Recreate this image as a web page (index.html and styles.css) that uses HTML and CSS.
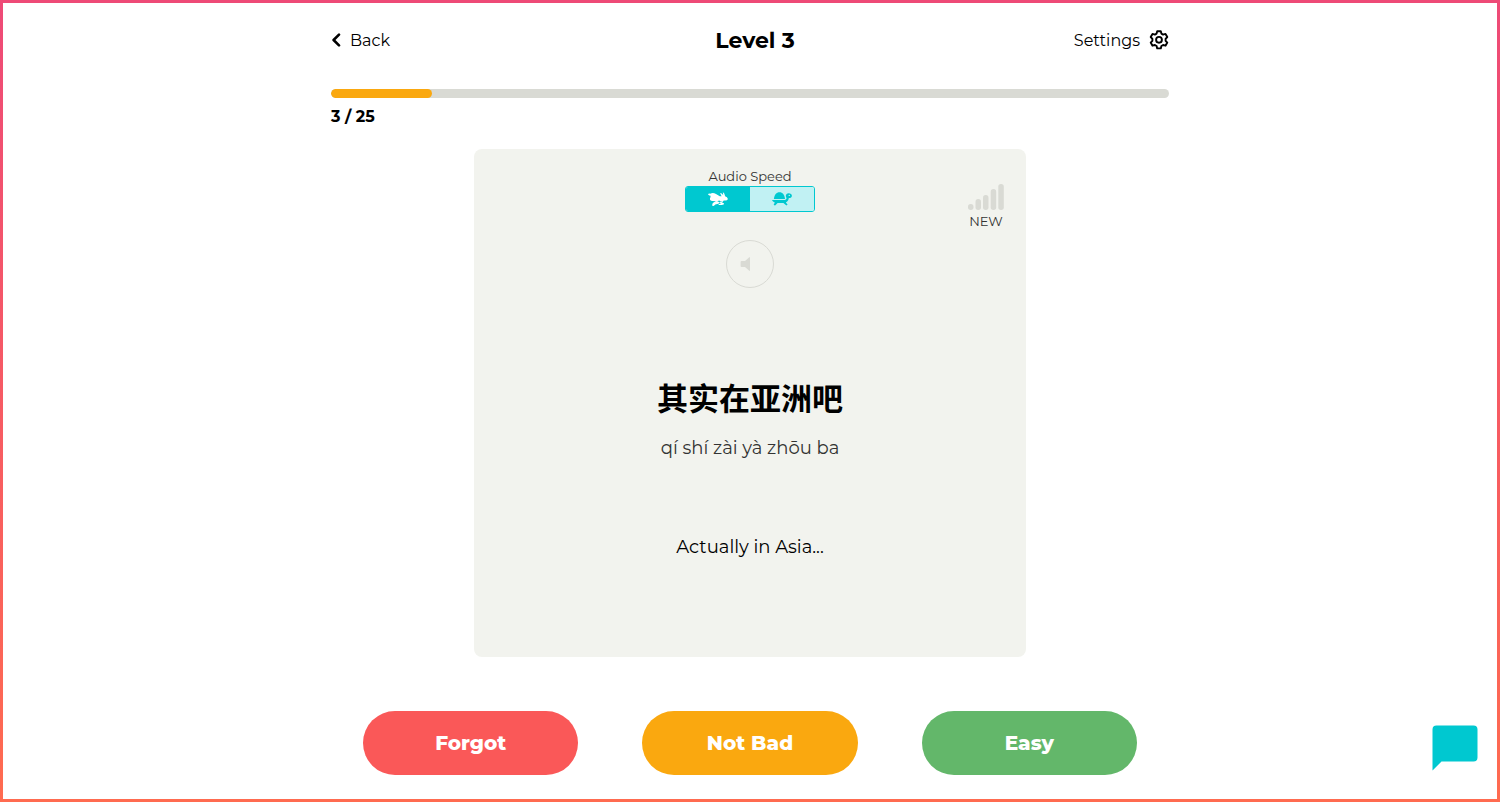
FILE: index.html
```html
<!DOCTYPE html>
<html lang="en">
<head>
    <meta charset="utf-8">
    <meta name="viewport" content="width=device-width, initial-scale=1">
    <title>Level 3</title>
    <link rel="stylesheet" href="styles.css">
</head>
<body>
    <div class="container">
        <header class="top-bar">
            <a class="back" href="#">
                <svg width="10" height="14" viewBox="0 0 10 14" fill="none" stroke="currentColor" stroke-width="2.6" stroke-linecap="round" stroke-linejoin="round"><path d="M8 1.6 2.6 7 8 12.400"/></svg>
                Back
            </a>
            <h1>Level 3</h1>
            <a class="settings" href="#">
                Settings
                <svg width="20" height="20" viewBox="0 0 20 20" fill="none" stroke="currentColor" stroke-width="1.9" stroke-linejoin="round"><path d="M8.200 1.200h3.600l.6 2.400 1.700 1 2.400-.7 1.800 3.100-1.700 1.800v2l1.700 1.800-1.800 3.100-2.400-.7-1.700 1-.6 2.400H8.200l-.6-2.400-1.700-1-2.400.7-1.800-3.100 1.700-1.800v-2L1.700 7l1.800-3.100 2.400.7 1.700-1z"/><circle cx="10" cy="9.800" r="2.900"/></svg>
            </a>
        </header>

        <progress class="progress" id="progress" max="25" value="3"></progress>
        <label class="count" for="progress">3 / 25</label>

        <main class="card">
            <div class="audio">
                <span class="audio-label" id="speedLabel">Audio Speed</span>
                <div class="speed" role="group" aria-labelledby="speedLabel">
                    <button type="button" class="active" aria-label="Normal" aria-pressed="true">
                        <svg width="20" height="14" viewBox="0 0 20 14" fill="currentColor"><path d="M0 2.400Q.6 1.200 2.200 1.800 4.800 0 8 2L11.800 4.200 13.600 4.200 12 1.100Q14 1.200 15.200 3.200L14.900 0Q16.800 1.200 17.100 4.200 19.400 5 19.900 7 19.400 8.600 17.400 8.600L15.800 8.600 14.400 9.900 11 8.600 9.600 9.200 4.500 9Q1.500 8.800 2 6.600 2.600 5.200 2.600 3.800 1.400 3.600 0 2.400Z"/><path d="M9.400 9.300 12 10.400Q10.400 12.400 7.800 12.200L5.600 14 4 13.500 4.800 10.900 8 9Z"/><path d="m12.600 9.400 3.500 2-.7 1.300-3.800-1.400ZM10.600 11.900h3.600l.5 1.200h-4Z"/></svg>
                    </button>
                    <button type="button" aria-label="Slow" aria-pressed="false">
                        <svg width="20" height="14" viewBox="0 0 20 14" fill="currentColor"><path d="M1.900 7C2.300 2.900 4.400.3 7.500.3S12.600 2.900 13 7Z"/><path d="M0 8h13.200l1.400-1.500-.8-2.400C13.800 2.200 15 1.200 16.600 1.200c2 0 3.300 1 3.300 2.600S18.700 6 16.800 6.100c-.2 2.200-1.400 3.700-3 4.300l1.800 2.200-1.200 1-3-2.700H5.600l-2.500 2.700-1.500-.7 1.200-2.500C1.500 10 .4 9.200 0 8Z"/><circle cx="17.300" cy="3.400" r=".7" fill="#c1f1f3"/></svg>
                    </button>
                </div>
            </div>

            <div class="strength">
                <svg width="36" height="26" viewBox="0 0 36 26" fill="#d9dad4"><rect y="20" width="5.500" height="6" rx="2.700"/><rect x="7.500" y="15" width="5.500" height="11" rx="2.700"/><rect x="15" y="11" width="5.500" height="15" rx="2.700"/><rect x="22.700" y="5" width="5.500" height="21" rx="2.700"/><rect x="30.300" width="5.500" height="26" rx="2.700"/></svg>
                <span>NEW</span>
            </div>

            <button type="button" class="play" aria-label="Play audio">
                <svg width="20" height="14" viewBox="0 0 20 14" fill="currentColor"><path d="M1.500 4H5l4-3.500a.5.5 0 0 1 1 .3v12.400a.5.5 0 0 1-1 .3L5 10H1.500a.9.9 0 0 1-.9-.9V4.900a.9.9 0 0 1 .9-.9Z"/></svg>
            </button>

            <p class="hanzi" lang="zh-CN">其实在亚洲吧</p>
            <p class="pinyin">qí shí zài yà zhōu ba</p>
            <p class="meaning">Actually in Asia...</p>
        </main>

        <div class="answers">
            <button type="button" class="forgot">Forgot</button>
            <button type="button" class="not-bad">Not Bad</button>
            <button type="button" class="easy">Easy</button>
        </div>
    </div>

    <button type="button" class="chat" aria-label="Chat">
        <svg width="46" height="46" viewBox="0 0 46 46" fill="currentColor"><path d="M4.500.5h37a4 4 0 0 1 4 4v28a4 4 0 0 1-4 4h-32L.5 45.500v-41a4 4 0 0 1 4-4Z"/></svg>
    </button>
</body>
</html>
```
FILE: styles.css
```css
* {
    box-sizing: border-box;
}
body {
    margin: 0;
    min-height: 100vh;
    border: 3px solid;
    border-image: linear-gradient(#ee4a77, #ff6b50) 1;
    background-color: #fff;
    color: #000;
    font-family: Montserrat, Inter, "Noto Sans CJK SC", sans-serif;
    font-size: 16px;
}
button {
    border: none;
    padding: 0;
    font-family: inherit;
    cursor: pointer;
}
svg {
    display: block;
    flex: none;
}
.container {
    max-width: 838px;
    margin: 0 auto;
    padding-top: 22px;
}
.top-bar {
    display: grid;
    grid-template-columns: 1fr auto 1fr;
    align-items: center;
    height: 30px;
}
.top-bar a {
    display: flex;
    align-items: center;
    color: inherit;
    text-decoration: none;
}
.top-bar h1 {
    margin: 0;
    padding-left: 10px;
    font-size: 22px;
    font-weight: 700;
}
.back {
    gap: 9px;
}
.settings {
    justify-content: flex-end;
    gap: 9px;
}
.progress {
    display: block;
    width: 100%;
    height: 9px;
    margin-top: 34px;
    border: none;
    border-radius: 5px;
    overflow: hidden;
    appearance: none;
}
.progress::-webkit-progress-bar {
    background-color: #d9dad4;
}
.progress::-webkit-progress-value {
    background-color: #faa80f;
    border-radius: 5px;
}
.count {
    display: block;
    margin-top: 9px;
    line-height: 20px;
    font-weight: 700;
}
.card {
    position: relative;
    display: flex;
    flex-direction: column;
    align-items: center;
    max-width: 552px;
    min-height: 508px;
    margin: 22px auto 0;
    padding: 18px 20px;
    border-radius: 8px;
    background-color: #f2f3ee;
}
.card p {
    margin: 0;
}
.audio {
    display: flex;
    flex-direction: column;
    align-items: center;
    color: #333;
    font-size: 13px;
    line-height: 19px;
}
.speed {
    display: flex;
    width: 130px;
    height: 26px;
    border: 1px solid #00c8d0;
    border-radius: 3px;
    overflow: hidden;
}
.speed button {
    display: flex;
    flex: 1;
    align-items: center;
    justify-content: center;
    background-color: #c1f1f3;
    color: #00c8d0;
}
.speed .active {
    background-color: #00c8d0;
    color: #fff;
}
.strength {
    position: absolute;
    top: 35px;
    right: 22px;
    display: flex;
    flex-direction: column;
    align-items: center;
    gap: 1px;
    color: #333;
    font-size: 13px;
    line-height: 20px;
}
.play {
    display: flex;
    align-items: center;
    justify-content: center;
    width: 48px;
    height: 48px;
    margin-top: 28px;
    border: 1px solid #d9dad4;
    border-radius: 50%;
    background-color: transparent;
    color: #d9dad4;
}
.card .hanzi {
    margin-top: 88px;
    font-size: 31px;
    font-weight: 700;
    line-height: 46px;
}
.card .pinyin {
    margin-top: 12px;
    color: #333;
    font-size: 18px;
    line-height: 28px;
}
.card .meaning {
    margin-top: 71px;
    font-size: 18px;
    line-height: 28px;
}
.answers {
    display: grid;
    grid-template-columns: repeat(3, 1fr);
    justify-items: center;
    padding: 54px 0 24px;
}
.answers button {
    width: 77%;
    height: 64px;
    border-radius: 32px;
    color: #fff;
    font-size: 20px;
    font-weight: 800;
}
.forgot {
    background-color: #fa5858;
}
.not-bad {
    background-color: #faa80f;
}
.easy {
    background-color: #63b76a;
}
.chat {
    position: fixed;
    right: 22px;
    bottom: 31px;
    background: none;
    color: #00c8d0;
}
```
